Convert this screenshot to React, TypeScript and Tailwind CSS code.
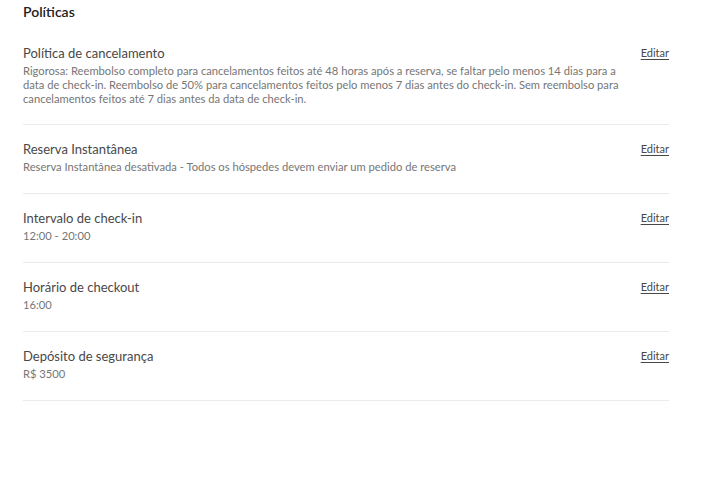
const ITEMS = [
  {
    title: "Política de cancelamento",
    desc: "Rigorosa: Reembolso completo para cancelamentos feitos até 48 horas após a reserva, se faltar pelo menos 14 dias para a data de check-in. Reembolso de 50% para cancelamentos feitos pelo menos 7 dias antes do check-in. Sem reembolso para cancelamentos feitos até 7 dias antes da data de check-in.",
  },
  {
    title: "Reserva Instantânea",
    desc: "Reserva Instantânea desativada - Todos os hóspedes devem enviar um pedido de reserva",
  },
  { title: "Intervalo de check-in", desc: "12:00 - 20:00" },
  { title: "Horário de checkout", desc: "16:00" },
  { title: "Depósito de segurança", desc: "R$ 3500" },
];

export default function App() {
  return (
    <div className="min-h-[480px] w-[727px] bg-white pl-[23px] pt-[2px] font-['Lato',sans-serif]">
      <h2 className="text-[14px] font-semibold leading-[20px] text-[#222222]">Políticas</h2>

      <div className="mt-[22px] w-[646px]">
        {ITEMS.map((item, i) => (
          <div key={item.title} className={i > 0 ? "border-t border-[#ebebeb]" : ""}>
            <div className={`flex items-start gap-4 ${i > 0 ? "pt-[15px] pb-[19px]" : "pb-[18px]"}`}>
              <div className="flex-1">
                <div className="text-[13px] leading-[18px] text-[#484848]">{item.title}</div>
                <div className="mt-[2px] text-[11.2px] leading-[14px] text-[#767676]">{item.desc}</div>
              </div>
              <a className="text-[11px] leading-[18px] text-[#484848] underline underline-offset-2">Editar</a>
            </div>
          </div>
        ))}
        <div className="border-t border-[#ebebeb]" />
      </div>
    </div>
  );
}
